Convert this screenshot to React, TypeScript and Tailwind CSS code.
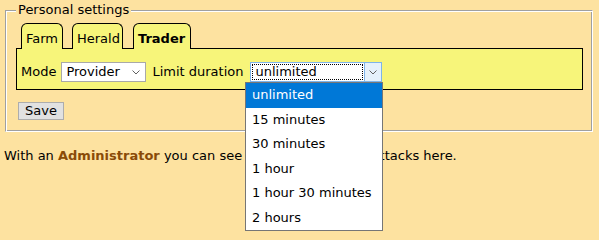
import React from 'react';

const tabs = [
  { label: 'Farm', width: 'w-[42px]', margin: 'ml-[5px]', active: false },
  { label: 'Herald', width: 'w-[51px]', margin: 'ml-[9px]', active: false },
  { label: 'Trader', width: 'w-[58px]', margin: 'ml-[10px]', active: true },
];

const durations = ['unlimited', '15 minutes', '30 minutes', '1 hour', '1 hour 30 minutes', '2 hours'];

const Chevron: React.FC<{ className?: string }> = ({ className }) => (
  <svg width="8" height="5" viewBox="0 0 8 5" className={className}>
    <path d="M0.5 0.5 L4 4 L7.5 0.5" fill="none" stroke="#606060" strokeWidth="1" />
  </svg>
);

const App: React.FC = () => {
  return (
    <div className="relative w-[599px] h-[240px] overflow-hidden bg-[#fde2a0] font-['DejaVu_Sans',sans-serif] text-[13px] leading-[16px] text-black">
      <fieldset className="ml-[5px] mt-[2px] w-[588px] border border-t-[#a0a0a0] border-l-[#a0a0a0] border-r-white border-b-white shadow-[inset_1px_1px_0_#fff,inset_-1px_-1px_0_#a0a0a0] pl-[10px] pr-[8px] pb-[11px] pt-[5px]">
        <legend className="px-[2px] bg-[#fde2a0]">Personal settings</legend>

        <div className="relative z-10 -mb-px flex items-end">
          {tabs.map((tab) => (
            <div
              key={tab.label}
              className={`${tab.width} ${tab.margin} h-[26px] rounded-t-[6px] border border-b-0 border-black bg-[#f7f57a] pl-[4px] pt-[7px] ${tab.active ? 'font-bold' : ''}`}
            >
              {tab.label}
            </div>
          ))}
        </div>

        <div className="w-[567px] h-[42px] border border-black bg-[#f7f57a] flex items-start pl-[4px] pt-[13px]">
          <span className="mt-[2px]">Mode</span>
          <div className="ml-[5px] w-[85px] h-[20px] border border-[#a9a9a9] bg-white flex items-center justify-between pl-[4px] pr-[5px]">
            <span>Provider</span>
            <Chevron />
          </div>
          <span className="ml-[6px] mt-[2px]">Limit duration</span>
          <div className="ml-[6px] w-[132px] h-[20px] border border-[#7eb4ea] bg-white flex">
            <div className="flex-1 m-px border border-dotted border-black flex items-center pl-[3px]">unlimited</div>
            <div className="w-[17px] bg-[#e5f1fb] border-l border-[#7eb4ea] flex items-center justify-center">
              <Chevron />
            </div>
          </div>
        </div>

        <button
          type="button"
          className="ml-[2px] mt-[12px] w-[46px] h-[18px] bg-[#e1e1e1] border border-[#adadad] leading-[14px]"
        >
          Save
        </button>
      </fieldset>

      <p className="mt-[16px] pl-[4px]">
        With an <span className="font-bold text-[#8a4b08]">Administrator</span> you can see all of the incoming attacks here.
      </p>

      <ul className="absolute left-[245px] top-[82px] w-[138px] border border-[#767676] bg-white">
        {durations.map((d, i) => (
          <li
            key={d}
            className={`h-[24.5px] flex items-center pl-[6px] ${i === 0 ? 'bg-[#0078d7] text-white' : 'text-black'}`}
          >
            {d}
          </li>
        ))}
      </ul>
    </div>
  );
};

export default App;
